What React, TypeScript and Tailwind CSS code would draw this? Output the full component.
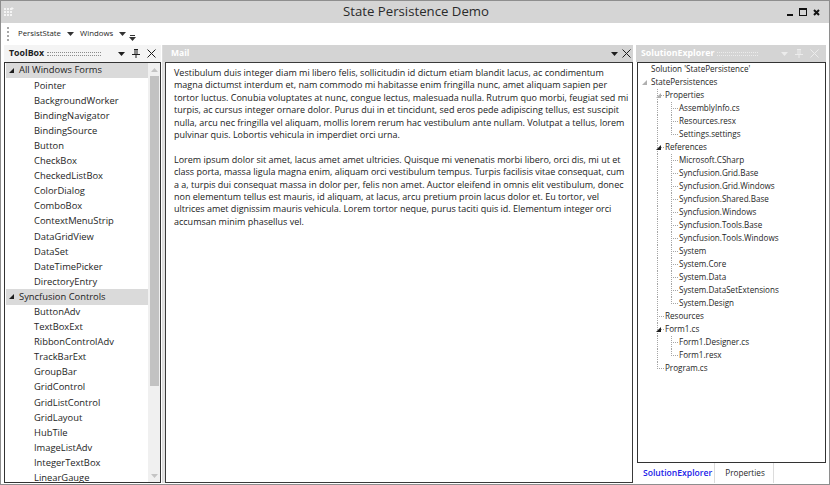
import React from "react";

const FORMS = [
  "Pointer",
  "BackgroundWorker",
  "BindingNavigator",
  "BindingSource",
  "Button",
  "CheckBox",
  "CheckedListBox",
  "ColorDialog",
  "ComboBox",
  "ContextMenuStrip",
  "DataGridView",
  "DataSet",
  "DateTimePicker",
  "DirectoryEntry",
];

const SYNCFUSION = [
  "ButtonAdv",
  "TextBoxExt",
  "RibbonControlAdv",
  "TrackBarExt",
  "GroupBar",
  "GridControl",
  "GridListControl",
  "GridLayout",
  "HubTile",
  "ImageListAdv",
  "IntegerTextBox",
  "LinearGauge",
];

const MAIL = [
  [
    "Vestibulum duis integer diam mi libero felis, sollicitudin id dictum etiam blandit lacus, ac condimentum",
    "magna dictumst interdum et, nam commodo mi habitasse enim fringilla nunc, amet aliquam sapien per",
    "tortor luctus. Conubia voluptates at nunc, congue lectus, malesuada nulla. Rutrum quo morbi, feugiat sed mi",
    "turpis, ac cursus integer ornare dolor. Purus dui in et tincidunt, sed eros pede adipiscing tellus, est suscipit",
    "nulla, arcu nec fringilla vel aliquam, mollis lorem rerum hac vestibulum ante nullam. Volutpat a tellus, lorem",
    "pulvinar quis. Lobortis vehicula in imperdiet orci urna.",
  ],
  [
    "Lorem ipsum dolor sit amet, lacus amet amet ultricies. Quisque mi venenatis morbi libero, orci dis, mi ut et",
    "class porta, massa ligula magna enim, aliquam orci vestibulum tempus. Turpis facilisis vitae consequat, cum",
    "a a, turpis dui consequat massa in dolor per, felis non amet. Auctor eleifend in omnis elit vestibulum, donec",
    "non elementum tellus est mauris, id aliquam, at lacus, arcu pretium proin lacus dolor et. Eu tortor, vel",
    "ultrices amet dignissim mauris vehicula. Lorem tortor neque, purus taciti quis id. Elementum integer orci",
    "accumsan minim phasellus vel.",
  ],
];

type Node = { t: string; l: number; exp?: "light" | "dark"; last?: boolean };

const TREE: Node[] = [
  { t: "Solution 'StatePersistence'", l: 0 },
  { t: "StatePersistences", l: 0, exp: "light" },
  { t: "Properties", l: 1, exp: "light" },
  { t: "AssemblyInfo.cs", l: 2 },
  { t: "Resources.resx", l: 2 },
  { t: "Settings.settings", l: 2, last: true },
  { t: "References", l: 1, exp: "dark" },
  { t: "Microsoft.CSharp", l: 2 },
  { t: "Syncfusion.Grid.Base", l: 2 },
  { t: "Syncfusion.Grid.Windows", l: 2 },
  { t: "Syncfusion.Shared.Base", l: 2 },
  { t: "Syncfusion.Windows", l: 2 },
  { t: "Syncfusion.Tools.Base", l: 2 },
  { t: "Syncfusion.Tools.Windows", l: 2 },
  { t: "System", l: 2 },
  { t: "System.Core", l: 2 },
  { t: "System.Data", l: 2 },
  { t: "System.DataSetExtensions", l: 2 },
  { t: "System.Design", l: 2, last: true },
  { t: "Resources", l: 1 },
  { t: "Form1.cs", l: 1, exp: "dark" },
  { t: "Form1.Designer.cs", l: 2 },
  { t: "Form1.resx", l: 2, last: true },
  { t: "Program.cs", l: 1, last: true },
];

function DropArrow({ color = "#1e1e1e" }: { color?: string }) {
  return (
    <svg width="7" height="4" viewBox="0 0 7 4">
      <polygon points="0,0 7,0 3.5,4" fill={color} />
    </svg>
  );
}

function Pin({ color = "#1e1e1e" }: { color?: string }) {
  return (
    <svg width="8" height="9" viewBox="0 0 8 9">
      <rect x="2" y="0" width="4" height="1" fill={color} />
      <rect x="2.5" y="1" width="1" height="4" fill={color} />
      <rect x="4.5" y="1" width="1" height="4" fill={color} />
      <rect x="0" y="5" width="8" height="1" fill={color} />
      <rect x="3.5" y="6" width="1" height="3" fill={color} />
    </svg>
  );
}

function Close({ color = "#1e1e1e" }: { color?: string }) {
  return (
    <svg width="9" height="9" viewBox="0 0 9 9">
      <path d="M0.5 0.5 L8.5 8.5 M8.5 0.5 L0.5 8.5" stroke={color} strokeWidth="1" />
    </svg>
  );
}

function Grip({ light }: { light?: boolean }) {
  return (
    <div
      className={`h-[4px] flex-1 border-y border-dotted ${
        light ? "border-[#ececec]" : "border-[#8c8c8c]"
      }`}
    />
  );
}

function Expand({ dark }: { dark?: boolean }) {
  return (
    <svg width="5" height="5" viewBox="0 0 5 5">
      <polygon points="5,0 5,5 0,5" fill={dark ? "#1e1e1e" : "#a8a8a8"} />
    </svg>
  );
}

function TreeRow({ n }: { n: Node }) {
  const w = 13 + 14 * n.l;
  const dots = "#a5a5a5";
  return (
    <div className="h-[13px] flex items-center whitespace-nowrap">
      <svg width={w} height="13" className="shrink-0">
        {Array.from({ length: Math.max(0, n.l - 1) }).map((_, i) => (
          <line
            key={i}
            x1={5.5 + 14 * (i + 1)}
            y1="0"
            x2={5.5 + 14 * (i + 1)}
            y2="13"
            stroke={dots}
            strokeDasharray="1 1"
          />
        ))}
        {n.l > 0 && (
          <>
            <line
              x1={5.5 + 14 * n.l}
              y1="0"
              x2={5.5 + 14 * n.l}
              y2={n.last ? 7 : 13}
              stroke={dots}
              strokeDasharray="1 1"
            />
            <line
              x1={5 + 14 * n.l}
              y1="6.5"
              x2={12 + 14 * n.l}
              y2="6.5"
              stroke={dots}
              strokeDasharray="1 1"
            />
          </>
        )}
        {n.exp && (
          <polygon
            points={`${9 + 14 * n.l},4 ${9 + 14 * n.l},9 ${4 + 14 * n.l},9`}
            fill={n.exp === "dark" ? "#1e1e1e" : "#b0b0b0"}
          />
        )}
      </svg>
      <span className="text-[8.1px] leading-none text-[#1e1e1e]">{n.t}</span>
    </div>
  );
}

function Category({ label }: { label: string }) {
  return (
    <div className="h-[15.1px] bg-[#dadada] flex items-center pl-[3px] gap-[5px]">
      <Expand dark />
      <span>{label}</span>
    </div>
  );
}

function Item({ label }: { label: string }) {
  return <div className="h-[15.1px] flex items-center pl-[28px]">{label}</div>;
}

export default function App() {
  return (
    <div className="w-[830px] h-[485px] bg-white border border-[#8e8e8e] flex flex-col overflow-hidden font-['Open_Sans',sans-serif] text-[#1e1e1e]">
      {/* title bar */}
      <div className="h-[22px] shrink-0 bg-[#d5d5d5] flex items-center pl-[3px] pr-[9px]">
        <svg width="10" height="10" viewBox="0 0 10 10" className="shrink-0">
          {[0, 3, 6].map((y) =>
            [0, 3, 6].map((x) => (
              <rect key={`${x}-${y}`} x={x} y={y + 1} width="2" height="2" fill="#f4f4f4" />
            ))
          )}
          <path d="M8 0 V3 M6.5 1.5 H9.5" stroke="#f4f4f4" strokeWidth="1" />
        </svg>
        <div className="flex-1 text-center text-[13.2px] text-[#2a2a2a] pl-[31px]">
          State Persistence Demo
        </div>
        <div className="flex items-center gap-[6px]">
          <svg width="6" height="8" viewBox="0 0 6 8">
            <rect x="0" y="6" width="6" height="2" fill="#111" />
          </svg>
          <svg width="8" height="8" viewBox="0 0 8 8">
            <rect x="0.5" y="0.5" width="7" height="7" fill="none" stroke="#111" />
            <rect x="0" y="0" width="8" height="2" fill="#111" />
          </svg>
          <svg width="7" height="7" viewBox="0 0 7 7">
            <path d="M1 1 L6 6 M6 1 L1 6" stroke="#111" strokeWidth="2" />
          </svg>
        </div>
      </div>

      {/* toolbar */}
      <div className="h-[21px] shrink-0 flex items-center pl-[6px] text-[7.8px] text-[#1e1e1e]">
        <div className="h-[14px] w-[2px] border-l-2 border-dotted border-[#a8a8a8]" />
        <div className="flex items-center gap-[6px] ml-[9px]">
          <span>PersistState</span>
          <DropArrow color="#333" />
        </div>
        <div className="flex items-center gap-[6px] ml-[6px]">
          <span>Windows</span>
          <DropArrow color="#333" />
        </div>
        <div className="flex flex-col items-center gap-[1px] ml-[3px] mt-[8px]">
          <div className="w-[5px] h-[1px] bg-[#333]" />
          <DropArrow color="#333" />
        </div>
      </div>

      {/* docking area */}
      <div className="flex-1 flex pl-[3px] pr-[3px] pt-[1px] pb-[1px] min-h-0">
        {/* toolbox */}
        <div className="w-[157px] shrink-0 flex flex-col">
          <div className="h-[17px] shrink-0 bg-[#f4f4f4] flex items-center pl-[5px] pr-[5px] gap-[3px]">
            <span className="text-[8.8px] font-bold">ToolBox</span>
            <Grip />
            <div className="flex items-center gap-[7px] ml-[14px]">
              <DropArrow />
              <Pin />
              <Close />
            </div>
          </div>
          <div className="flex-1 border border-[#333] flex min-h-0">
            <div className="flex-1 overflow-hidden pl-[1px] text-[9.4px]">
              <Category label="All Windows Forms" />
              {FORMS.map((f) => (
                <Item key={f} label={f} />
              ))}
              <Category label="Syncfusion Controls" />
              {SYNCFUSION.map((f) => (
                <Item key={f} label={f} />
              ))}
            </div>
            <div className="w-[12px] shrink-0 bg-[#f0f0f0] flex flex-col items-center">
              <div className="h-[13px] flex items-center">
                <svg width="7" height="4" viewBox="0 0 7 4">
                  <polygon points="3.5,0 7,4 0,4" fill="#c4c4c4" />
                </svg>
              </div>
              <div className="w-[9px] h-[310px] bg-[#c2c2c2]" />
              <div className="flex-1" />
              <div className="h-[13px] flex items-center">
                <DropArrow color="#c4c4c4" />
              </div>
            </div>
          </div>
        </div>

        {/* splitter */}
        <div className="w-[2px] shrink-0 border-r border-[#dcdcdc]" />

        {/* mail */}
        <div className="w-[470px] shrink-0 flex flex-col">
          <div className="h-[17px] shrink-0 bg-[#d4d4d4] flex items-center pl-[8px] pr-[2px]">
            <span className="text-[8.5px] font-bold text-white">Mail</span>
            <div className="flex-1" />
            <div className="flex items-center gap-[4px]">
              <DropArrow />
              <Close />
            </div>
          </div>
          <div className="flex-1 flex min-h-0 min-w-0">
            <div className="w-[2px] shrink-0 bg-[#e2e2e2]" />
            <div className="flex-1 min-w-0 overflow-hidden border border-[#3a3a3a] pl-[8px] pt-[4px] text-[9px] leading-[12.4px] text-[#1a1a1a]">
              {MAIL.map((p, i) => (
                <div key={i} className="mb-[12.4px]">
                  {p.map((line) => (
                    <div key={line} className="whitespace-nowrap">
                      {line}
                    </div>
                  ))}
                </div>
              ))}
            </div>
          </div>
        </div>

        <div className="w-[3px] shrink-0" />

        {/* solution explorer */}
        <div className="w-[190px] shrink-0 flex flex-col">
          <div className="h-[17px] shrink-0 bg-[#d4d4d4] flex items-center pl-[5px] pr-[7px] gap-[3px]">
            <span className="text-[8.8px] font-bold text-white">SolutionExplorer</span>
            <Grip light />
            <div className="flex items-center gap-[7px] ml-[20px]">
              <DropArrow color="#ececec" />
              <Pin color="#ececec" />
              <Close color="#ececec" />
            </div>
          </div>
          <div className="flex-1 border border-[#333] ml-[1px] overflow-hidden">
            {TREE.map((n, i) => (
              <TreeRow key={i} n={n} />
            ))}
          </div>
          <div className="h-[20px] shrink-0 flex items-center pl-[1px]">
            <div className="h-full flex items-center pl-[6px] pr-[2px] border-r border-[#dcdcdc] text-[8.6px] text-[#2020e8] font-semibold">
              SolutionExplorer
            </div>
            <div className="h-full flex items-center pl-[10px] pr-[8px] border-r border-[#dcdcdc] text-[8.2px] text-[#2a2a2a]">
              Properties
            </div>
          </div>
        </div>
      </div>
    </div>
  );
}
